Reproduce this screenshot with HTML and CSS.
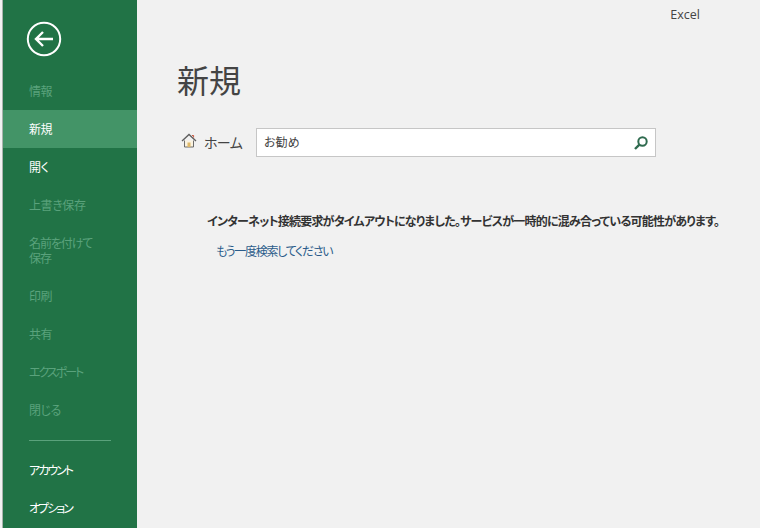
FILE: index.html
```html
<!DOCTYPE html>
<html lang="ja">
<head>
  <meta charset="UTF-8" />
  <title>Excel</title>
  <link rel="stylesheet" href="styles.css">
</head>
<body>
  <!-- Backstage side menu -->
  <nav class="sidebar">
    <button class="back-button" aria-label="戻る">
      <svg width="36" height="36" viewBox="0 0 36 36">
        <circle cx="18" cy="18" r="16.2" fill="none" stroke="#fff" stroke-width="2"/>
        <path d="M27 18H10M17 11l-7 7 7 7" fill="none" stroke="#fff" stroke-width="2.4"/>
      </svg>
    </button>
    <ul class="menu">
      <li class="menu-item disabled">情報</li>
      <li class="menu-item active">新規</li>
      <li class="menu-item">開く</li>
      <li class="menu-item disabled">上書き保存</li>
      <li class="menu-item disabled tall">名前を付けて<br>保存</li>
      <li class="menu-item disabled">印刷</li>
      <li class="menu-item disabled">共有</li>
      <li class="menu-item disabled kana">エクスポート</li>
      <li class="menu-item disabled">閉じる</li>
    </ul>
    <div class="menu-divider"></div>
    <ul class="menu">
      <li class="menu-item kana">アカウント</li>
      <li class="menu-item kana">オプション</li>
    </ul>
  </nav>

  <!-- Main panel -->
  <main class="content">
    <div class="app-name">Excel</div>
    <h1 class="page-title">新規</h1>
    <div class="search-row">
      <a class="home-link">
        <svg class="home-icon" width="16" height="16" viewBox="0 0 16 16">
          <path d="M3.5 7.5V14h9V7.5" fill="#fbf3e0" stroke="#6b6b6b"/>
          <rect x="6.5" y="9.5" width="3" height="4.5" fill="#e0b96a"/>
          <path d="M1 8l7-6.5L15 8" fill="none" stroke="#5f5f5f" stroke-width="1.4"/>
          <path d="M11 2.5h1.6v2" fill="none" stroke="#c8553d"/>
        </svg>
        <span class="home-text">ホーム</span>
      </a>
      <div class="search-box">
        <span class="search-text">お勧め</span>
        <svg width="16" height="16" viewBox="0 0 16 16">
          <circle cx="9.5" cy="6.5" r="4.2" fill="none" stroke="#2f6b4f" stroke-width="2"/>
          <path d="M6.4 9.6L2 14" stroke="#2f6b4f" stroke-width="2.4"/>
        </svg>
      </div>
    </div>
    <div class="message">
      <p class="message-text">インターネット接続要求がタイムアウトになりました。サービスが一時的に混み合っている可能性があります。</p>
      <a class="retry-link">もう一度検索してください</a>
    </div>
  </main>
</body>
</html>
```

FILE: styles.css
```css
* {
  margin: 0;
  padding: 0;
  box-sizing: border-box;
}
body {
  font-family: "Noto Sans CJK JP", "Liberation Sans", sans-serif;
  font-feature-settings: "palt";
  background: #f1f1f1;
  color: #333;
  width: 760px;
  height: 528px;
  overflow: hidden;
  display: flex;
}

/* Side menu */
.sidebar {
  width: 135px;
  height: 528px;
  flex: none;
  margin-left: 2px;
  border-left: 1px solid #a9b3ad;
  background: #217346;
  color: #fff;
  font-size: 12px;
  letter-spacing: -0.4px;
  overflow: hidden;
}
.back-button {
  display: block;
  width: 36px;
  height: 36px;
  margin: 21px 0 0 23px;
  background: none;
  border: none;
}
.menu {
  list-style: none;
}
.sidebar > .back-button + .menu {
  margin-top: 15px;
}
.menu-item {
  height: 38px;
  line-height: 38px;
  padding-left: 26px;
}
.menu-item.tall {
  height: 53px;
  line-height: 15px;
  padding-top: 11px;
  letter-spacing: -1.1px;
}
.menu-item.kana {
  letter-spacing: -2px;
}
.menu-item.active {
  background: #439467;
}
.menu-item.disabled {
  color: #5aa27c;
}
.menu-divider {
  width: 82px;
  height: 1px;
  margin: 11px 0 10px 26px;
  background: #5aa27c;
}

/* Main panel */
.content {
  flex: 1;
  min-width: 0;
  padding: 0 0 0 40px;
  position: relative;
}
.app-name {
  position: absolute;
  top: 6px;
  right: 60px;
  font-family: "Open Sans", "Liberation Sans", sans-serif;
  font-size: 12.5px;
  color: #444;
}
.page-title {
  margin-top: 58px;
  font-size: 32px;
  line-height: 42px;
  font-weight: 400;
  color: #444;
}
.search-row {
  display: flex;
  align-items: center;
  margin-top: 28px;
}
.home-link {
  display: flex;
  align-items: center;
  width: 79px;
  padding-left: 4px;
  font-size: 14px;
  color: #444;
}
.home-icon {
  margin-right: 7px;
  margin-top: -4px;
}
.home-text {
  letter-spacing: -0.6px;
  margin-top: -2px;
}
.search-box {
  width: 400px;
  height: 29px;
  display: flex;
  align-items: center;
  justify-content: space-between;
  padding: 0 6px 0 7px;
  background: #fff;
  border: 1px solid #c6c6c6;
  font-size: 12px;
  color: #444;
}
.search-text {
  margin-top: -2px;
}
.message {
  margin-top: 55px;
  margin-left: 30px;
  font-size: 12px;
}
.message-text {
  font-weight: 700;
  color: #333;
  white-space: nowrap;
  line-height: 18px;
  letter-spacing: -0.8px;
}
.retry-link {
  display: block;
  margin-top: 12px;
  margin-left: 9px;
  line-height: 18px;
  color: #2b5c8a;
  letter-spacing: -1.3px;
}
```
